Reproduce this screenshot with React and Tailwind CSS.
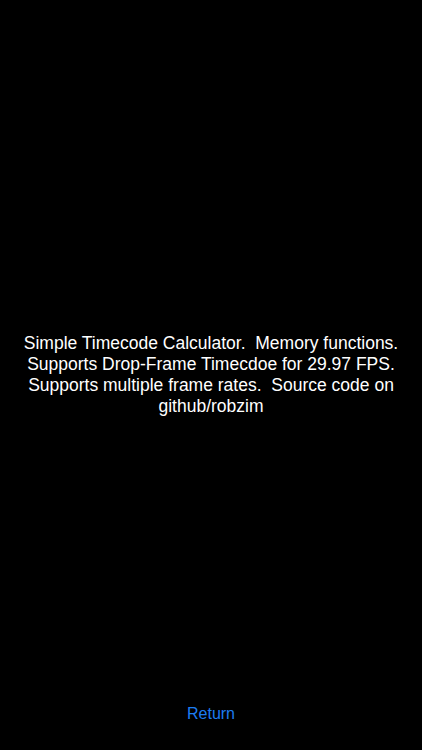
export default function App() {
  return (
    <div className="h-[750px] w-full bg-black flex flex-col items-center font-['Liberation_Sans',Arial,sans-serif]">
      <div className="flex-1 flex items-center justify-center px-[18px] pt-[45px]">
        <p className="text-white text-[17.5px] leading-[21px] text-center whitespace-pre-wrap">
          {'Simple Timecode Calculator.  Memory functions.  Supports Drop-Frame Timecdoe for 29.97 FPS.  Supports multiple frame rates.  Source code on github/robzim'}
        </p>
      </div>
      <button className="text-[#1d7cf2] text-[16px] leading-[20px] mb-[26px]">Return</button>
    </div>
  );
}
